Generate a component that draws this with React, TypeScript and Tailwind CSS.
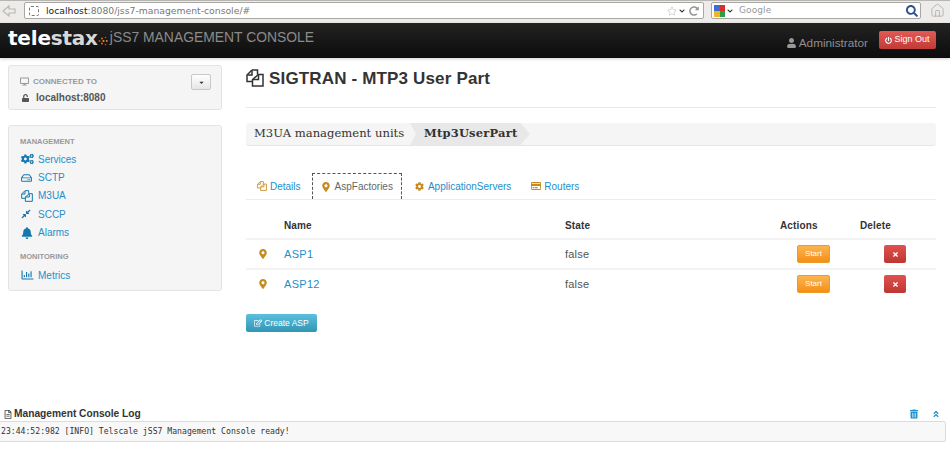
import {
  FaBell,
  FaCaretDown,
  FaCog,
  FaCogs,
  FaCompressAlt,
  FaDesktop,
  FaMapMarkerAlt,
  FaPowerOff,
  FaRegChartBar,
  FaRegCreditCard,
  FaRegEdit,
  FaRegFileAlt,
  FaRegHdd,
  FaRegStar,
  FaTimes,
  FaTrashAlt,
  FaUnlock,
  FaUser,
  FaAngleDoubleUp,
  FaChevronDown,
  FaSearch,
  FaRedoAlt,
} from "react-icons/fa";
import { House } from "lucide-react";

const sans = "font-['Liberation_Sans',Arial,sans-serif]";

// overlapped pages, thinner than the packaged copy icons
function CopyIcon({ className }: { className: string }) {
  return (
    <svg viewBox="0 0 18 18" fill="none" stroke="currentColor" strokeWidth="1.5" className={className}>
      <path d="M6 1 H11.5 V5.5 M6 1 L1 6 V12.5 H6.5" />
      <path d="M6 1.5 V6 H1.5" />
      <path d="M12.5 5.5 H17 V17 H6.5 V10.5 Z" />
      <path d="M12.5 5.5 V10.5 H6.5" />
    </svg>
  );
}

function BrowserBar() {
  return (
    <div className="h-[23px] bg-[#edecea] border-t border-[#b8b6b2] flex items-start pt-px pl-[2px] pr-[5px] font-['DejaVu_Sans',sans-serif]">
      <svg viewBox="0 0 14 14" fill="none" stroke="#b8b8b4" strokeWidth="1.2" className="w-[14px] h-[14px] mt-[2px]">
        <path d="M7 2 L1 7 L7 12 V9 H13 V5 H7 Z" />
      </svg>
      <div className="ml-[8px] flex-1 h-[17px] bg-white border border-[#a9a7a3] rounded-[2px] flex items-center pl-[4px] pr-[4px]">
        <div className="w-[10px] h-[10px] border border-dashed border-[#777] rounded-[2px]" />
        <span className="ml-[7px] text-[9.25px] text-[#222]">localhost</span>
        <span className="text-[9.25px] text-[#777]">:8080/jss7-management-console/#</span>
        <div className="flex-1" />
        <FaRegStar className="w-[10px] h-[10px] text-[#d4d4d4]" />
        <FaChevronDown className="w-[6px] h-[6px] ml-[2px] text-[#222]" />
        <FaRedoAlt className="w-[10px] h-[10px] ml-[4px] text-[#999]" />
      </div>
      <div className="ml-[7px] w-[210px] h-[17px] bg-white border border-[#a9a7a3] rounded-[2px] flex items-center pl-[2px] pr-[2px]">
        <div className="w-[11px] h-[12px] grid grid-cols-2">
          <div className="bg-[#3b6fd4]" />
          <div className="bg-[#d93025]" />
          <div className="bg-[#f0b429]" />
          <div className="bg-[#2e9e45]" />
        </div>
        <FaChevronDown className="w-[6px] h-[6px] ml-[2px] text-[#222]" />
        <span className="ml-[6px] text-[9px] tracking-[0.1px] text-[#999]">Google</span>
        <div className="flex-1" />
        <FaSearch className="w-[12px] h-[12px] text-[#2d4f96]" />
      </div>
      <House className="ml-[9px] mt-px w-[15px] h-[15px] text-[#a8a8a4]" strokeWidth={1.25} />
    </div>
  );
}

function Header() {
  return (
    <header className={`h-[35px] bg-gradient-to-b from-[#232323] to-[#0c0c0c] flex items-start pl-[8px] pr-[14px] shadow-[0_1px_3px_rgba(0,0,0,0.2)] ${sans}`}>
      <span className="font-['DejaVu_Sans',sans-serif] font-bold text-[20px] leading-[31px] tracking-[-0.2px] text-white">
        tele<span className="text-[#d8d8d8]">stax</span>
      </span>
      <svg viewBox="0 0 10 10" className="w-[10px] h-[10px] mt-[13px]">
        <circle cx="1.5" cy="5" r="1" fill="#c9551a" />
        <circle cx="4" cy="2.5" r="1" fill="#e8641c" />
        <circle cx="4" cy="7.5" r="1" fill="#e8641c" />
        <circle cx="5.5" cy="5" r="1.1" fill="#f08a24" />
        <circle cx="7.5" cy="1.5" r="0.8" fill="#c9551a" />
        <circle cx="7.5" cy="8.5" r="0.8" fill="#c9551a" />
        <circle cx="8.8" cy="5" r="0.9" fill="#f08a24" />
      </svg>
      <span className="ml-[2px] text-[13.9px] leading-[28px] text-[#8b8b8b]">jSS7 MANAGEMENT CONSOLE</span>
      <div className="flex-1" />
      <FaUser className="w-[11px] h-[10px] mt-[15px] text-[#999]" />
      <span className="ml-[2px] mt-[12px] text-[11.75px] leading-[16px] text-[#8f8f8f]">Administrator</span>
      <button className="ml-[11px] mt-[8px] w-[57px] h-[18px] rounded-[2px] bg-gradient-to-b from-[#e15a55] to-[#c23a36] flex items-center justify-center text-white text-[9px]">
        <FaPowerOff className="w-[7px] h-[7px] mr-[2px]" />
        Sign Out
      </button>
    </header>
  );
}

function NavItem({ icon, label }: { icon: React.ReactNode; label: string }) {
  return (
    <div className="flex items-center h-[18.4px] text-[10px] text-[#1c8fcb]">
      <span className="w-[18px] flex justify-start pl-px text-[#1577ad]">{icon}</span>
      {label}
    </div>
  );
}

function Sidebar() {
  return (
    <aside className={`w-[214px] ${sans}`}>
      <div className="h-[45px] bg-[#f5f5f5] border border-[#e3e3e3] rounded-[3px] pl-[11px] pr-[10px] flex justify-between">
        <div className="pt-[10px]">
          <div className="flex items-center text-[8px] leading-[11px] font-bold text-[#999]">
            <FaDesktop className="w-[9px] h-[9px] mr-[4px]" />
            CONNECTED TO
          </div>
          <div className="mt-[5px] flex items-center text-[10px] leading-[11px] font-bold text-[#555]">
            <FaUnlock className="w-[9px] h-[8px] ml-px mr-[6px]" />
            localhost:8080
          </div>
        </div>
        <button className="mt-[8px] w-[20px] h-[16px] rounded-[2px] border border-[#c8c8c8] bg-gradient-to-b from-white to-[#e6e6e6] flex items-center justify-center text-[#333]">
          <FaCaretDown className="w-[7px] h-[7px]" />
        </button>
      </div>
      <div className="mt-[15px] h-[166px] bg-[#f5f5f5] border border-[#e3e3e3] rounded-[3px] pl-[11px] pt-[11px]">
        <div className="text-[7.5px] leading-[10px] font-bold text-[#999] mb-[3px]">MANAGEMENT</div>
        <NavItem icon={<FaCogs className="w-[13px] h-[12px]" />} label="Services" />
        <NavItem icon={<FaRegHdd className="w-[11px] h-[10px]" />} label="SCTP" />
        <NavItem icon={<CopyIcon className="w-[12px] h-[12px]" />} label="M3UA" />
        <NavItem icon={<FaCompressAlt className="w-[10px] h-[10px]" />} label="SCCP" />
        <NavItem icon={<FaBell className="w-[12px] h-[12px]" />} label="Alarms" />
        <div className="mt-[10px] text-[7.5px] leading-[10px] font-bold text-[#999] mb-[4px]">MONITORING</div>
        <NavItem icon={<FaRegChartBar className="w-[13px] h-[12px]" />} label="Metrics" />
      </div>
    </aside>
  );
}

function Tab({ icon, label, active, className = "" }: { icon: React.ReactNode; label: string; active?: boolean; className?: string }) {
  return (
    <div
      className={`h-[26px] flex items-center text-[10px] ${
        active ? "border border-dashed border-[#555] border-b-0 pl-[9px] pr-[8px] text-[#666]" : "px-[11px] text-[#1c8fcb]"
      } ${className}`}
    >
      <span className="w-[12px] mr-[1px] text-[#c68a1e]">{icon}</span>
      {label}
    </div>
  );
}

function AspRow({ name, divider }: { name: string; divider?: boolean }) {
  return (
    <div className={`grid grid-cols-[38px_281px_232px_87px_1fr] items-center h-[30px] text-[11px] ${divider ? "border-b-2 border-[#f3f3f3]" : "pb-[2px]"}`}>
      <FaMapMarkerAlt className="w-[8px] h-[10px] ml-[13px] text-[#c68a1e]" />
      <span className="text-[#1c8fcb] tracking-[0.3px]">{name}</span>
      <span className="text-[#555] tracking-[0.2px]">false</span>
      <button className="w-[33px] h-[18px] rounded-[2px] bg-gradient-to-b from-[#fbb450] to-[#f58f0c] border border-[#ec9a2a] text-white text-[8px]">Start</button>
      <button className="w-[22px] h-[18px] rounded-[2px] bg-gradient-to-b from-[#e0524f] to-[#bd3632] flex items-center justify-center text-white">
        <FaTimes className="w-[7px] h-[7px]" />
      </button>
    </div>
  );
}

function Main() {
  return (
    <main className={`w-[690px] ml-[24px] ${sans}`}>
      <div className="h-[43px] border-b border-[#e8e8e8] flex items-start">
        <CopyIcon className="w-[18px] h-[18px] mt-[4px] text-[#333]" />
        <h1 className="ml-[5px] text-[17px] leading-[27px] font-bold tracking-[0.16px] text-[#333]">SIGTRAN - MTP3 User Part</h1>
      </div>
      <div className="mt-[15px] h-[23px] rounded-[3px] bg-[#f5f5f5] border-b border-[#e6e6e6] flex items-center font-['DejaVu_Serif',serif] text-[11.6px] text-[#333] whitespace-nowrap">
        <div className="h-full flex items-center pl-[8px] w-[164px]">M3UA management units</div>
        <div className="h-full flex items-center w-[120px] pl-[14px] font-bold text-[11.5px] tracking-[0.2px] bg-[#e8e8e8] [clip-path:polygon(0_0,92%_0,100%_50%,92%_100%,0_100%,6px_50%)]">
          Mtp3UserPart
        </div>
      </div>
      <div className="mt-[27px] flex border-b border-[#ececec] h-[27px] items-start">
        <Tab icon={<CopyIcon className="w-[10px] h-[10px]" />} label="Details" />
        <Tab icon={<FaMapMarkerAlt className="w-[8px] h-[10px]" />} label="AspFactories" active />
        <Tab icon={<FaCog className="w-[9px] h-[9px]" />} label="ApplicationServers" className="ml-[2px]" />
        <Tab icon={<FaRegCreditCard className="w-[10px] h-[10px]" />} label="Routers" className="-ml-[2px]" />
      </div>
      <div className="mt-[18px] grid grid-cols-[38px_281px_215px_80px_1fr] h-[22px] border-b-2 border-[#f3f3f3] text-[10px] font-bold text-[#333] tracking-[0.15px]">
        <span />
        <span>Name</span>
        <span>State</span>
        <span>Actions</span>
        <span>Delete</span>
      </div>
      <AspRow name="ASP1" divider />
      <AspRow name="ASP12" />
      <button className="mt-[14px] w-[71px] h-[18px] rounded-[2px] bg-gradient-to-b from-[#5bc0de] to-[#2f96b4] flex items-center justify-center text-white text-[8.5px]">
        <FaRegEdit className="w-[8px] h-[8px] mr-[2px]" />
        Create ASP
      </button>
    </main>
  );
}

function LogPanel() {
  return (
    <div className={`mt-auto mb-[10px] ${sans}`}>
      <div className="h-[14px] flex items-center pl-[4px] pr-[10px]">
        <FaRegFileAlt className="w-[8px] h-[9px] text-[#444]" />
        <span className="ml-[2px] text-[10.2px] font-bold text-[#333]">Management Console Log</span>
        <div className="flex-1" />
        <FaTrashAlt className="w-[8px] h-[10px] text-[#1c8fcb]" />
        <FaAngleDoubleUp className="ml-[14px] w-[8px] h-[8px] text-[#1c8fcb]" />
      </div>
      <div className="h-[21px] w-[947px] -ml-px bg-[#f8f8f8] border border-[#dcdcdc] rounded-[2px] flex items-center pl-px font-['DejaVu_Sans_Mono',monospace] text-[8.15px] text-[#333]">
        23:44:52:982 [INFO] Telscale jSS7 Management Console ready!
      </div>
    </div>
  );
}

export default function App() {
  return (
    <div className="w-[950px] h-[452px] bg-white flex flex-col overflow-hidden">
      <BrowserBar />
      <Header />
      <div className="flex pl-[8px] pt-[7px]">
        <Sidebar />
        <Main />
      </div>
      <LogPanel />
    </div>
  );
}
